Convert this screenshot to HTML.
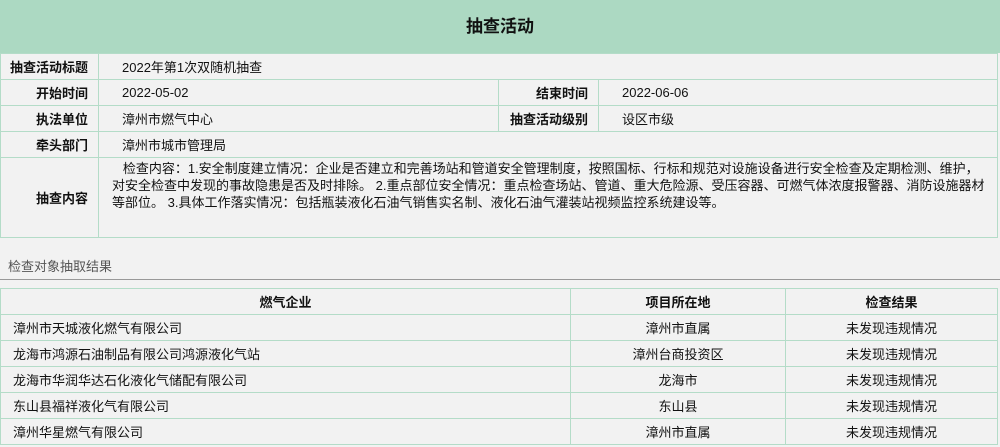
<!DOCTYPE html>
<html><head><meta charset="utf-8"><style>
*{margin:0;padding:0;box-sizing:border-box}
body{width:1000px;height:447px;overflow:hidden;background:#f2f2f2;font-family:"Liberation Sans","Noto Sans CJK SC",sans-serif;font-size:13px;color:#111}
.hd{height:53px;background:#acd9c2;text-align:center;line-height:53px;font-size:17px;font-weight:bold;color:#111}
table{border-collapse:collapse;width:998px;table-layout:fixed}
td{border:1px solid #b4dcc8;height:26px;padding:0}
.l{text-align:right;font-weight:bold;padding-right:10px}
.v{padding-left:23px}
.sec{position:absolute;left:8px;top:256px;color:#555;font-size:13px}
.line{position:absolute;left:0;top:279px;width:1000px;height:1px;background:#999}
.t2{position:absolute;top:288px;left:0}
.t2 td{height:26px}
.t2 th{border:1px solid #b4dcc8;height:26px;font-weight:bold;font-size:13px}
</style></head><body>
<div class="hd">抽查活动</div>
<table>
<colgroup><col style="width:98px"><col style="width:400px"><col style="width:100px"><col></colgroup>
<tr><td class="l">抽查活动标题</td><td class="v" colspan="3">2022年第1次双随机抽查</td></tr>
<tr><td class="l">开始时间</td><td class="v">2022-05-02</td><td class="l">结束时间</td><td class="v">2022-06-06</td></tr>
<tr><td class="l">执法单位</td><td class="v">漳州市燃气中心</td><td class="l">抽查活动级别</td><td class="v">设区市级</td></tr>
<tr><td class="l">牵头部门</td><td class="v" colspan="3">漳州市城市管理局</td></tr>
<tr><td class="l" style="height:80px">抽查内容</td><td colspan="3" style="vertical-align:top;padding:2px 12px 0 13px;line-height:17px">&nbsp;&nbsp;&nbsp;检查内容：1.安全制度建立情况：企业是否建立和完善场站和管道安全管理制度，按照国标、行标和规范对设施设备进行安全检查及定期检测、维护，对安全检查中发现的事故隐患是否及时排除。 2.重点部位安全情况：重点检查场站、管道、重大危险源、受压容器、可燃气体浓度报警器、消防设施器材等部位。 3.具体工作落实情况：包括瓶装液化石油气销售实名制、液化石油气灌装站视频监控系统建设等。</td></tr>
</table>
<div class="sec">检查对象抽取结果</div>
<div class="line"></div>
<table class="t2">
<colgroup><col style="width:570px"><col style="width:215px"><col></colgroup>
<tr><th>燃气企业</th><th>项目所在地</th><th>检查结果</th></tr>
<tr><td style="padding-left:12px">漳州市天城液化燃气有限公司</td><td align="center">漳州市直属</td><td align="center">未发现违规情况</td></tr>
<tr><td style="padding-left:12px">龙海市鸿源石油制品有限公司鸿源液化气站</td><td align="center">漳州台商投资区</td><td align="center">未发现违规情况</td></tr>
<tr><td style="padding-left:12px">龙海市华润华达石化液化气储配有限公司</td><td align="center">龙海市</td><td align="center">未发现违规情况</td></tr>
<tr><td style="padding-left:12px">东山县福祥液化气有限公司</td><td align="center">东山县</td><td align="center">未发现违规情况</td></tr>
<tr><td style="padding-left:12px">漳州华星燃气有限公司</td><td align="center">漳州市直属</td><td align="center">未发现违规情况</td></tr>
</table>
</body></html>
